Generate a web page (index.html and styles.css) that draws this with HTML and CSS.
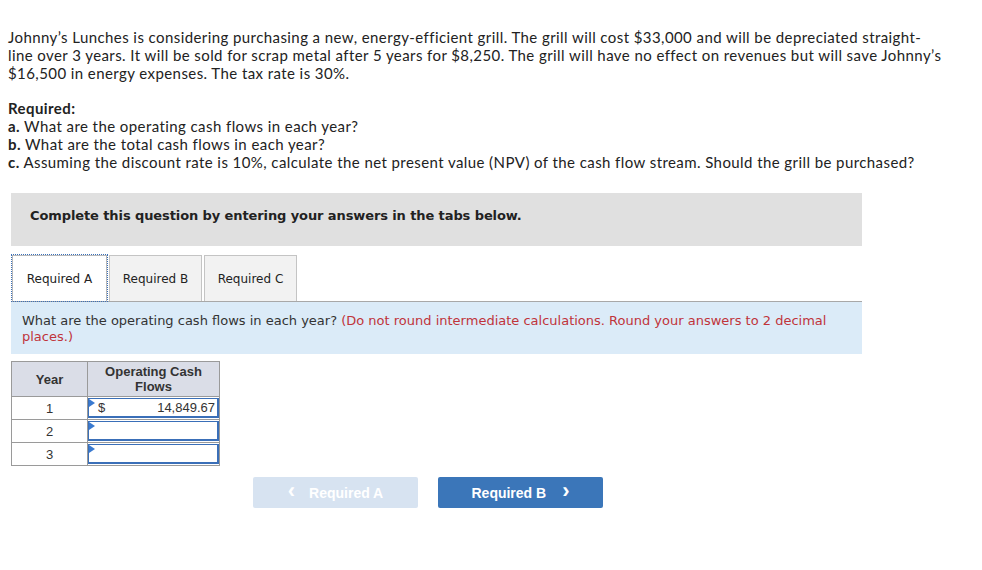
FILE: index.html
```html
<!DOCTYPE html>
<html>
<head>
<meta charset="utf-8">
<link rel="stylesheet" href="styles.css">
</head>
<body>
<div class="page">
  <p class="intro">Johnny’s Lunches is considering purchasing a new, energy-efficient grill. The grill will cost $33,000 and will be depreciated straight-<br>line over 3 years. It will be sold for scrap metal after 5 years for $8,250. The grill will have no effect on revenues but will save Johnny’s<br>$16,500 in energy expenses. The tax rate is 30%.</p>
  <div class="required">
    <div class="req-title">Required:</div>
    <div><b>a.</b> What are the operating cash flows in each year?</div>
    <div><b>b.</b> What are the total cash flows in each year?</div>
    <div><b>c.</b> Assuming the discount rate is 10%, calculate the net present value (NPV) of the cash flow stream. Should the grill be purchased?</div>
  </div>
  <div class="banner">Complete this question by entering your answers in the tabs below.</div>
  <div class="tabs">
    <div class="tab active">Required A</div>
    <div class="tab">Required B</div>
    <div class="tab">Required C</div>
  </div>
  <div class="instructions">
    <div>What are the operating cash flows in each year? <span class="note">(Do not round intermediate calculations. Round your answers to 2 decimal</span></div>
    <div class="note">places.)</div>
  </div>
  <table class="grid">
    <tr><th class="c-year">Year</th><th class="c-val">Operating Cash<br>Flows</th></tr>
    <tr><td class="year">1</td><td class="cell"><div class="input"><span class="dollar">$</span><span class="amt">14,849.67</span></div></td></tr>
    <tr><td class="year">2</td><td class="cell"><div class="input"></div></td></tr>
    <tr><td class="year">3</td><td class="cell"><div class="input"></div></td></tr>
  </table>
  <div class="nav">
    <div class="btn prev"><span class="chev">‹</span>Required A</div>
    <div class="btn next">Required B<span class="chev">›</span></div>
  </div>
</div>
</body>
</html>
```
FILE: styles.css
```css
html, body { margin: 0; padding: 0; background: #fff; }
.page {
  padding: 28px 0 0 8px;
  font-family: "Lato", "Open Sans", sans-serif;
  color: #222;
  font-size: 15px;
  letter-spacing: 0.42px;
}
.intro {
  margin: 0;
  line-height: 18px;
  white-space: nowrap;
}
.required {
  margin-top: 17px;
  line-height: 18px;
}
.req-title { font-weight: bold; }
.required b { font-weight: bold; }
.banner {
  margin: 22px 0 0 3px;
  width: 851px;
  height: 53px;
  box-sizing: border-box;
  background: #e0e0e0;
  font-family: "DejaVu Sans", Verdana, sans-serif;
  font-weight: bold;
  font-size: 13px;
  letter-spacing: -0.1px;
  color: #222;
  padding: 15px 0 0 19px;
}
.tabs {
  display: flex;
  margin: 8px 0 0 3px;
  width: 851px;
  border-bottom: 1px solid #a8a8a8;
  height: 47px;
  align-items: flex-end;
  letter-spacing: 0;
}
.tab {
  height: 46px;
  box-sizing: border-box;
  border: 1px solid #c4c4c4;
  border-bottom: none;
  background: #f2f2f2;
  font-family: "DejaVu Sans", Verdana, sans-serif;
  font-size: 12px;
  color: #222;
  width: 93px;
  justify-content: center;
  display: flex;
  align-items: center;
  margin-right: 2px;
}
.tab.active {
  background: #fff;
  width: 95px;
  height: 46px;
  margin: 0 2px 0 1px;
  border: 1px solid #b8b8b8;
  border-bottom: none;
  outline: 1px dotted #3a6fb8;
  outline-offset: 0;
}
.instructions {
  margin-left: 3px;
  width: 851px;
  box-sizing: border-box;
  background: #dbebf8;
  font-family: "DejaVu Sans", Verdana, sans-serif;
  font-size: 13px;
  line-height: 16px;
  letter-spacing: 0;
  color: #333;
  padding: 11px 11px 9px;
  height: 52px;
}
.note { color: #c0343b; }
.grid {
  margin: 7px 0 0 3px;
  border-collapse: collapse;
  font-family: "Liberation Sans", Arial, sans-serif;
  font-size: 13px;
  letter-spacing: 0;
  color: #333;
}
.grid th, .grid td {
  border: 1px solid #9a9a9a;
  padding: 0;
}
.grid th {
  background: #dadde7;
  font-weight: bold;
  color: #333;
  height: 34px;
  line-height: 15px;
}
.c-year { width: 75px; }
.c-val { width: 131px; }
.year { text-align: center; height: 22px; }
.cell { position: relative; }
.input {
  height: 20px;
  margin: 0;
  border: 2px solid #3a6fb8;
  border-width: 1px 2px 2px 1px;
  box-sizing: border-box;
  display: flex;
  justify-content: space-between;
  align-items: center;
  padding: 0 2px 0 9px;
  position: relative;
}
.input::before {
  content: "";
  position: absolute;
  left: 0;
  top: 0;
  border-left: 6px solid #3a7ad0;
  border-top: 4px solid transparent;
  border-bottom: 4px solid transparent;
}
.nav {
  display: flex;
  gap: 20px;
  margin: 11px 0 0 245px;
  letter-spacing: 0;
}
.btn {
  width: 165px;
  height: 31px;
  border-radius: 2px;
  display: flex;
  align-items: center;
  justify-content: center;
  color: #fff;
  font-family: "Liberation Sans", Arial, sans-serif;
  font-weight: bold;
  font-size: 14px;
}
.prev { background: #d7e3f1; }
.next { background: #3b76b9; }
.chev { font-size: 22px; font-weight: bold; line-height: 1; margin-top: -3px; }
.prev .chev { margin-right: 14px; }
.next .chev { margin-left: 16px; }
```
